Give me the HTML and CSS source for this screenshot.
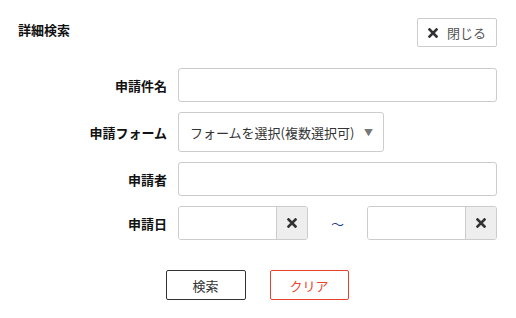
FILE: index.html
```html
<!DOCTYPE html>
<html lang="ja">
<head>
<meta charset="utf-8">
<link rel="stylesheet" href="styles.css">
</head>
<body>
<div class="panel">
  <div class="header">
    <h2 class="title">詳細検索</h2>
    <button class="close-btn"><svg class="x-icon" viewBox="0 0 10 10" width="10" height="10"><path d="M1.5 1.5 L8.5 8.5 M8.5 1.5 L1.5 8.5" stroke="#333" stroke-width="2.6" stroke-linecap="square"/></svg><span>閉じる</span></button>
  </div>
  <div class="form">
    <label class="label">申請件名</label>
    <div class="field"><div class="input wide"></div></div>

    <label class="label">申請フォーム</label>
    <div class="field"><div class="select"><span>フォームを選択(複数選択可)</span><span class="caret">▼</span></div></div>

    <label class="label">申請者</label>
    <div class="field"><div class="input wide"></div></div>

    <label class="label">申請日</label>
    <div class="field dates">
      <div class="date">
        <div class="date-input"></div>
        <div class="date-clear"><svg class="x-icon" viewBox="0 0 10 10" width="10" height="10"><path d="M1.5 1.5 L8.5 8.5 M8.5 1.5 L1.5 8.5" stroke="#333" stroke-width="2.6" stroke-linecap="square"/></svg></div>
      </div>
      <span class="tilde">～</span>
      <div class="date">
        <div class="date-input"></div>
        <div class="date-clear"><svg class="x-icon" viewBox="0 0 10 10" width="10" height="10"><path d="M1.5 1.5 L8.5 8.5 M8.5 1.5 L1.5 8.5" stroke="#333" stroke-width="2.6" stroke-linecap="square"/></svg></div>
      </div>
    </div>
  </div>
  <div class="actions">
    <button class="btn btn-search">検索</button>
    <button class="btn btn-clear">クリア</button>
  </div>
</div>
</body>
</html>
```
FILE: styles.css
```css
* { box-sizing: border-box; }
html, body { margin: 0; padding: 0; background: #fff; }
body {
  font-family: "Noto Sans CJK JP", "Noto Sans", sans-serif;
  font-size: 13px;
  color: #333;
  width: 516px;
  height: 318px;
  overflow: hidden;
}
.panel { padding: 18px 19px 0 18px; }
.header {
  display: flex;
  justify-content: space-between;
  align-items: flex-start;
  height: 29px;
}
.title {
  margin: 0;
  padding-top: 2px;
  font-size: 13px;
  font-weight: bold;
  color: #111;
  line-height: 19px;
}
.close-btn {
  width: 80px;
  height: 29px;
  border: 1px solid #ccc;
  border-radius: 2px;
  background: #fff;
  display: flex;
  align-items: center;
  justify-content: center;
  gap: 9px;
  padding: 0;
  font-family: inherit;
  font-size: 13px;
  color: #555;
}
.x-icon { display: block; }
.form {
  margin-top: 21px;
  display: grid;
  grid-template-columns: 149px 1fr;
  column-gap: 11px;
  row-gap: 10px;
  align-items: center;
}
.label {
  text-align: right;
  font-weight: bold;
  font-size: 13px;
  color: #111;
}
.input {
  height: 34px;
  border: 1px solid #ccc;
  border-radius: 3px;
  background: #fff;
}
.select {
  width: 206px;
  height: 40px;
  border: 1px solid #ccc;
  border-radius: 3px;
  display: flex;
  align-items: center;
  justify-content: space-between;
  padding: 0 10px 0 11px;
  font-size: 13px;
  color: #333;
}
.caret { font-size: 9px; color: #777; }
.dates {
  display: flex;
  align-items: center;
}
.date {
  width: 130px;
  height: 34px;
  display: flex;
  border: 1px solid #ccc;
  border-radius: 3px;
  overflow: hidden;
}
.date-input { flex: 1; background: #fff; }
.date-clear {
  width: 31px;
  background: #eee;
  border-left: 1px solid #ccc;
  display: flex;
  align-items: center;
  justify-content: center;
}
.tilde {
  width: 59px;
  text-align: center;
  color: #1b3f8f;
  font-size: 13px;
}
.actions {
  margin-top: 30px;
  display: flex;
  justify-content: center;
  gap: 24px;
  margin-left: -18px;
  margin-right: -17px;
}
.btn {
  width: 80px;
  height: 30px;
  background: #fff;
  border-radius: 2px;
  font-family: inherit;
  font-size: 13px;
}
.btn-search { border: 1px solid #333; color: #333; }
.btn-clear { border: 1px solid #e8432d; color: #e8432d; width: 79px; }
```
